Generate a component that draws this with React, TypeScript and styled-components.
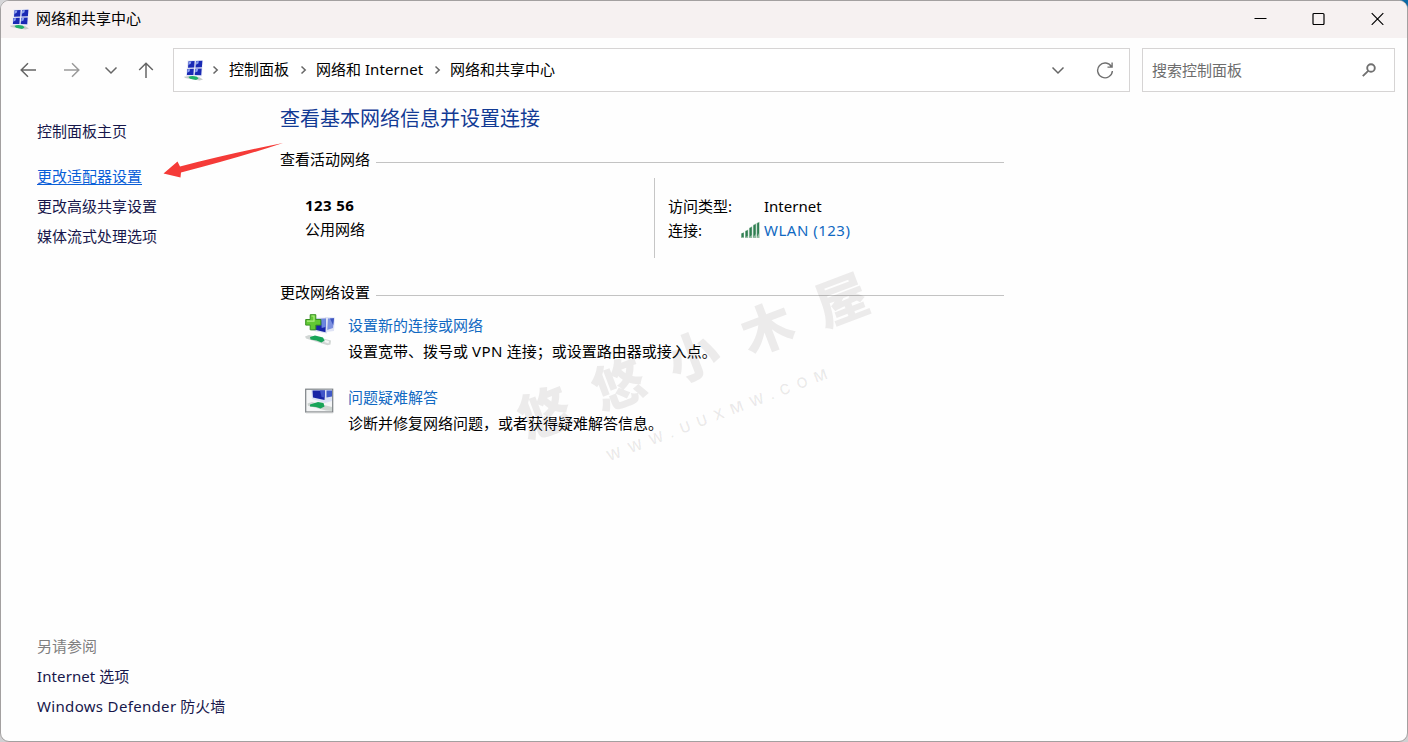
import React from 'react';
import styled, { createGlobalStyle } from 'styled-components';

const GlobalStyle = createGlobalStyle`
  *, *::before, *::after { box-sizing: border-box; }
  html, body, #root { height: 100%; }
  body {
    margin: 0;
    overflow: hidden;
    background: linear-gradient(90deg, #d6d6d8 0 95%, #0b6aa6 95%) top / 100% 30px no-repeat, #d0d0d2;
    font-family: "Noto Sans", "Noto Sans CJK SC", sans-serif;
    font-size: 15px;
    color: #000;
  }
  svg { display: block; flex: none; }
`;

const Window = styled.div`
  position: relative;
  display: flex;
  flex-direction: column;
  width: 1408px;
  height: 742px;
  border: 1px solid #a3a0a0;
  border-radius: 9px;
  background: #fefefe;
  overflow: hidden;
  white-space: nowrap;
`;

const TitleBar = styled.header`
  display: flex;
  align-items: center;
  height: 37px;
  padding: 0 0 2px 9px;
  background: #f6f1f1;
`;

const Title = styled.span`
  flex: 1;
  margin-left: 6px;
  padding-bottom: 2px;
`;

const Controls = styled.div`
  display: flex;
  gap: 45.5px;
  margin-right: 23.5px;
`;

const NavBar = styled.nav`
  display: flex;
  align-items: center;
  height: 64px;
  padding: 0 12px 0 18px;
`;

const NavButtons = styled.div`
  display: flex;
  align-items: center;
  width: 154px;
`;

const NavIcon = styled.span<{ $w: number }>`
  width: ${(p) => p.$w}px;
`;

const AddressBox = styled.div`
  display: flex;
  align-items: center;
  width: 957px;
  height: 44px;
  padding: 0 15px 0 10px;
  border: 1px solid #d6d4d4;
  background: #fff;
`;

const Crumb = styled.span<{ $w: number }>`
  width: ${(p) => p.$w}px;
  padding-bottom: 2px;
  line-height: 24px;
`;

const Spacer = styled.span`
  flex: 1;
`;

const SearchBox = styled(AddressBox)`
  width: 253px;
  margin-left: 12px;
  padding: 0 18px 0 9px;
  justify-content: space-between;
  color: #6d6d6d;
`;

const SearchHint = styled.span`
  padding-bottom: 2px;
`;

const Body = styled.div`
  display: flex;
  flex: 1;
`;

const Sidebar = styled.aside`
  display: flex;
  flex-direction: column;
  width: 279px;
  padding: 14px 0 20px 36px;
  line-height: 30px;
  color: #17174b;
`;

const SideLink = styled.a<{ $active?: boolean; $muted?: boolean }>`
  align-self: flex-start;
  color: ${(p) => (p.$active ? '#0a5fd8' : p.$muted ? '#808080' : 'inherit')};
  text-decoration: ${(p) => (p.$active ? 'underline' : 'none')};
  text-decoration-thickness: 1px;
  text-underline-offset: 2px;
`;

const HomeLink = styled(SideLink)`
  margin-bottom: 15px;
`;

const Latin = styled.span<{ $spacing: number }>`
  letter-spacing: ${(p) => p.$spacing}px;
`;

const Main = styled.main`
  width: 724px;
  padding-top: 3px;
`;

const Heading = styled.h1`
  margin: 0;
  font-size: 20px;
  font-weight: 400;
  line-height: 28px;
  color: #123a94;
`;

const SectionTitle = styled.h2<{ $gap: number }>`
  display: flex;
  align-items: center;
  gap: 6px;
  margin: ${(p) => p.$gap}px 0 0;
  font-size: 15px;
  font-weight: 400;
  line-height: 24px;

  &::after {
    content: '';
    flex: 1;
    height: 1px;
    margin-top: 7px;
    background: #c3c3c3;
  }
`;

const ActiveNetwork = styled.div`
  display: flex;
  height: 80px;
  margin-top: 7px;
  line-height: 24px;
`;

const NetworkName = styled.div`
  width: 375px;
  padding: 15px 0 0 25px;
  border-right: 1px solid #c6c6c6;
`;

const Details = styled.dl`
  display: grid;
  grid-template-columns: 73px 23px auto;
  grid-auto-rows: 24px;
  align-items: center;
  margin: 16px 0 0 13px;

  dt, dd { margin: 0; }
`;

const Link = styled.a`
  color: #1169c2;
`;

const Tasks = styled.div`
  padding-top: 8px;
`;

const Task = styled.div`
  display: flex;
  height: 72px;
  padding-left: 25px;
  line-height: 26px;
`;

const TaskIcon = styled.span<{ $top: number }>`
  width: 43px;
  padding-top: ${(p) => p.$top}px;
`;

const Watermark = styled.div<{ $x: number; $y: number }>`
  position: absolute;
  left: ${(p) => p.$x}px;
  top: ${(p) => p.$y}px;
  transform: translate(-50%, -50%) rotate(-20.8deg);
  color: rgba(50, 40, 40, 0.09);
  pointer-events: none;
  line-height: 1;
`;

const MarkName = styled.span`
  font: 900 52px/1 "Noto Sans CJK SC", sans-serif;
  letter-spacing: 27.4px;
  margin-right: -27.4px;
`;

const MarkUrl = styled.span`
  font: 600 14.5px/1 Inter, sans-serif;
  letter-spacing: 7.4px;
  margin-right: -7.4px;
`;

const Pointer = styled.svg`
  position: absolute;
  left: 162px;
  top: 140px;
`;

const NetworkIcon = () => (
  <svg width="20" height="22" viewBox="0 0 20 22">
    <path d="M3.500 1.500L18.800 1 18 17.500 2 17z" fill="#e6e9f7" />
    <path d="M4.500 2.200l6.100-.2-.4 6.500-6.200.2zM12 2l6.400-.2-.5 6.500-6.400.2zM3.300 10l6.500-.2-.4 6.300-6.500-.1zM11.200 9.800l6.500-.2-.5 6.600-6.500-.2z" fill="#1a2ab4" />
    <path d="M4.800 2.500l2.600-.1-.7 2.400-2.300 1.200zM12.300 2.300l2.700-.1-.7 2.400-2.400 1.200zM3.600 10.300l2.600-.1-.7 2.300-2.300 1.200zM11.500 10.100l2.700-.1-.7 2.400-2.400 1.200z" fill="#8da2ee" />
    <path d="M0 17.800l5-.8 10 1 4 2.500-3.500 1L1 19z" fill="#c8cdca" />
    <path d="M4.500 18c2-1.400 5-1.200 8.500-.3l1.500 1.800-2.500 1.500-6-1.200z" fill="#20b068" />
  </svg>
);

const Chevron = ({ down = false }: { down?: boolean }) => (
  <svg width="14" height="14" viewBox="0 0 14 14" fill="none" stroke="#666" strokeWidth="1.5">
    <path d={down ? 'M1.500 4.500L7 10l5.500-5.500' : 'M5.500 3.500L9.200 7l-3.700 3.500'} />
  </svg>
);

const Arrow = ({ rotate = 0, color = '#666' }: { rotate?: number; color?: string }) => (
  <svg width="18" height="18" viewBox="0 0 18 18" fill="none" stroke={color} strokeWidth="1.5">
    <path transform={`rotate(${rotate} 9 9)`} d="M17 9H2.500M9 2.200L2.200 9 9 15.800" />
  </svg>
);

const SignalIcon = () => (
  <svg width="19" height="18" viewBox="0 0 19 18">
    <path d="M0 12.500l3-1.200V17H0zM4 10l3.200-1.500V17H4zM8 7l3.200-1.800V17H8zM12 4l3-1.600V17h-3zM15.600 2L18.500.8V17h-2.900z" fill="#94bda3" />
    <path d="M.7 12.500l1.900-.8V16H.7zM4.700 10.200l2-1V15l-2 1zM8.700 7.300l2-1.200V14l-2 2zM12.600 4.500l2-1.200V13l-2 3zM16.200 2.400l1.800-.9V12l-1.800 4z" fill="#2f7f52" />
  </svg>
);

const AddConnectionIcon = () => (
  <svg width="31" height="32" viewBox="0 0 31 32">
    <path d="M20 3l10 .5-1 13.500-8 1z" fill="#dfe3f5" />
    <path d="M22 4.500l7-.2-1 9.700-6 2z" fill="#7d90df" />
    <path d="M25 4.400l4-.1-.8 7z" fill="#3d54bf" />
    <path d="M6 4l17-.5-1 16-16-3z" fill="#dce2f2" />
    <path d="M8 5l13-.2-.5 13.400L7 15z" fill="#1826a8" />
    <path d="M16 5l5-.2-.3 8.200-4 1z" fill="#6c86df" />
    <path d="M0 22.500l4-1.500 22 5.500-.5 4-3 .8L1 24.500z" fill="#d1d6d4" />
    <path d="M5 23l5-1.500 8 2 1.500 3-3 2-5-2-6-1z" fill="#18a458" />
    <path d="M20 26l4 1-.5 2.500-4-1.500z" fill="#f5f6f6" />
    <path d="M5.200.7h5.600v4.800h5v5.600h-5v4.700H5.200v-4.700H.7V5.500h4.500z" fill="#62c934" stroke="#389022" />
    <path d="M6.500 2h2.500v5.200H2" stroke="#aeee82" strokeWidth="1.2" fill="none" />
  </svg>
);

const TroubleshootIcon = () => (
  <svg width="29" height="26" viewBox="0 0 29 26">
    <rect x=".7" y="1.200" width="27" height="22.800" fill="#f4f5f6" stroke="#7d8286" strokeWidth="1.200" />
    <path d="M1 24.800h27" stroke="#c9cbcc" />
    <path d="M6 2l21-.2V13l-7 2L7 11z" fill="#dbe1f4" />
    <path d="M7.500 2.500H20l-.5 9.500L8 9.500z" fill="#1824a4" />
    <path d="M15 2.500h5l-.4 7-3-.5z" fill="#4054c8" />
    <path d="M21.500 2.500H27v6l-5.500 1z" fill="#4059c7" />
    <path d="M2.500 15.500L7 14l20 5v4l-6-.5L3 17.700z" fill="#cdd4d1" />
    <path d="M5 16.500l8-2.500 5.500 1 1 3.500-4 2-4.500-1.500-6-.5z" fill="#18a458" />
  </svg>
);

function TaskList() {
  return (
    <Tasks>
      <Task>
        <TaskIcon $top={2}><AddConnectionIcon /></TaskIcon>
        <div>
          <Link>设置新的连接或网络</Link>
          <div>设置宽带、拨号或 <Latin $spacing={0.5}>VPN</Latin> 连接；或设置路由器或接入点。</div>
        </div>
      </Task>
      <Task>
        <TaskIcon $top={4}><TroubleshootIcon /></TaskIcon>
        <div>
          <Link>问题疑难解答</Link>
          <div>诊断并修复网络问题，或者获得疑难解答信息。</div>
        </div>
      </Task>
    </Tasks>
  );
}

export default function App() {
  return (
    <>
      <GlobalStyle />
      <Window>
        <TitleBar>
          <NetworkIcon />
          <Title>网络和共享中心</Title>
          <Controls>
            <svg width="13" height="13" viewBox="0 0 13 13" stroke="#000" fill="none"><path d="M.5 6.500h12" /></svg>
            <svg width="13" height="13" viewBox="0 0 13 13" stroke="#000" fill="none" strokeWidth="1.200"><rect x="1" y="1.500" width="11" height="11" rx="1" /></svg>
            <svg width="13" height="13" viewBox="0 0 13 13" stroke="#000" fill="none" strokeWidth="1.200"><path d="M.7 1.200l11.600 11.600M12.300 1.200L.7 12.800" /></svg>
          </Controls>
        </TitleBar>
        <NavBar>
          <NavButtons>
            <NavIcon $w={44}><Arrow /></NavIcon>
            <NavIcon $w={41}><Arrow rotate={180} color="#9a9a9a" /></NavIcon>
            <NavIcon $w={33}><Chevron down /></NavIcon>
            <Arrow rotate={90} />
          </NavButtons>
          <AddressBox>
            <NavIcon $w={24}><NetworkIcon /></NavIcon>
            <NavIcon $w={21}><Chevron /></NavIcon>
            <Crumb $w={67}>控制面板</Crumb>
            <NavIcon $w={20}><Chevron /></NavIcon>
            <Crumb $w={114}>网络和 <Latin $spacing={0.1}>Internet</Latin></Crumb>
            <NavIcon $w={20}><Chevron /></NavIcon>
            <Crumb $w={120}>网络和共享中心</Crumb>
            <Spacer />
            <NavIcon $w={45}><Chevron down /></NavIcon>
            <svg width="18" height="18" viewBox="0 0 18 18" fill="none" stroke="#707070" strokeWidth="1.400">
              <path d="M15.500 5.800A7.400 7.400 0 1 0 16.400 10M16.100 1.500v4.600h-4.600" />
            </svg>
          </AddressBox>
          <SearchBox>
            <SearchHint>搜索控制面板</SearchHint>
            <svg width="14" height="14" viewBox="0 0 14 14" fill="none" stroke="#707070" strokeWidth="1.900">
              <circle cx="9" cy="5" r="3.800" /><path d="M6.200 7.800L.8 13.200" />
            </svg>
          </SearchBox>
        </NavBar>
        <Body>
          <Sidebar>
            <HomeLink>控制面板主页</HomeLink>
            <SideLink $active>更改适配器设置</SideLink>
            <SideLink>更改高级共享设置</SideLink>
            <SideLink>媒体流式处理选项</SideLink>
            <Spacer />
            <SideLink $muted>另请参阅</SideLink>
            <SideLink><Latin $spacing={0.1}>Internet</Latin> 选项</SideLink>
            <SideLink><Latin $spacing={0.33}>Windows Defender</Latin> 防火墙</SideLink>
          </Sidebar>
          <Main>
            <Heading>查看基本网络信息并设置连接</Heading>
            <SectionTitle $gap={14}>查看活动网络</SectionTitle>
            <ActiveNetwork>
              <NetworkName>
                <b><Latin $spacing={0.4}>123 56</Latin></b>
                <div>公用网络</div>
              </NetworkName>
              <Details>
                <dt>访问类型:</dt><span /><dd>Internet</dd>
                <dt>连接:</dt><SignalIcon /><dd><Link><Latin $spacing={0.5}>WLAN (123)</Latin></Link></dd>
              </Details>
            </ActiveNetwork>
            <SectionTitle $gap={22}>更改网络设置</SectionTitle>
            <TaskList />
          </Main>
        </Body>
        <Watermark $x={691} $y={353}><MarkName>悠悠小木屋</MarkName></Watermark>
        <Watermark $x={716} $y={414}><MarkUrl>WWW.UUXMW.COM</MarkUrl></Watermark>
        <Pointer width="120" height="40" viewBox="0 0 120 40">
          <path d="M.5 32.500L14.500 20.500l2.500 5Q65 13 120 2 75 17 18 31.500L17.500 36.500z" fill="#f53b38" />
        </Pointer>
      </Window>
    </>
  );
}
